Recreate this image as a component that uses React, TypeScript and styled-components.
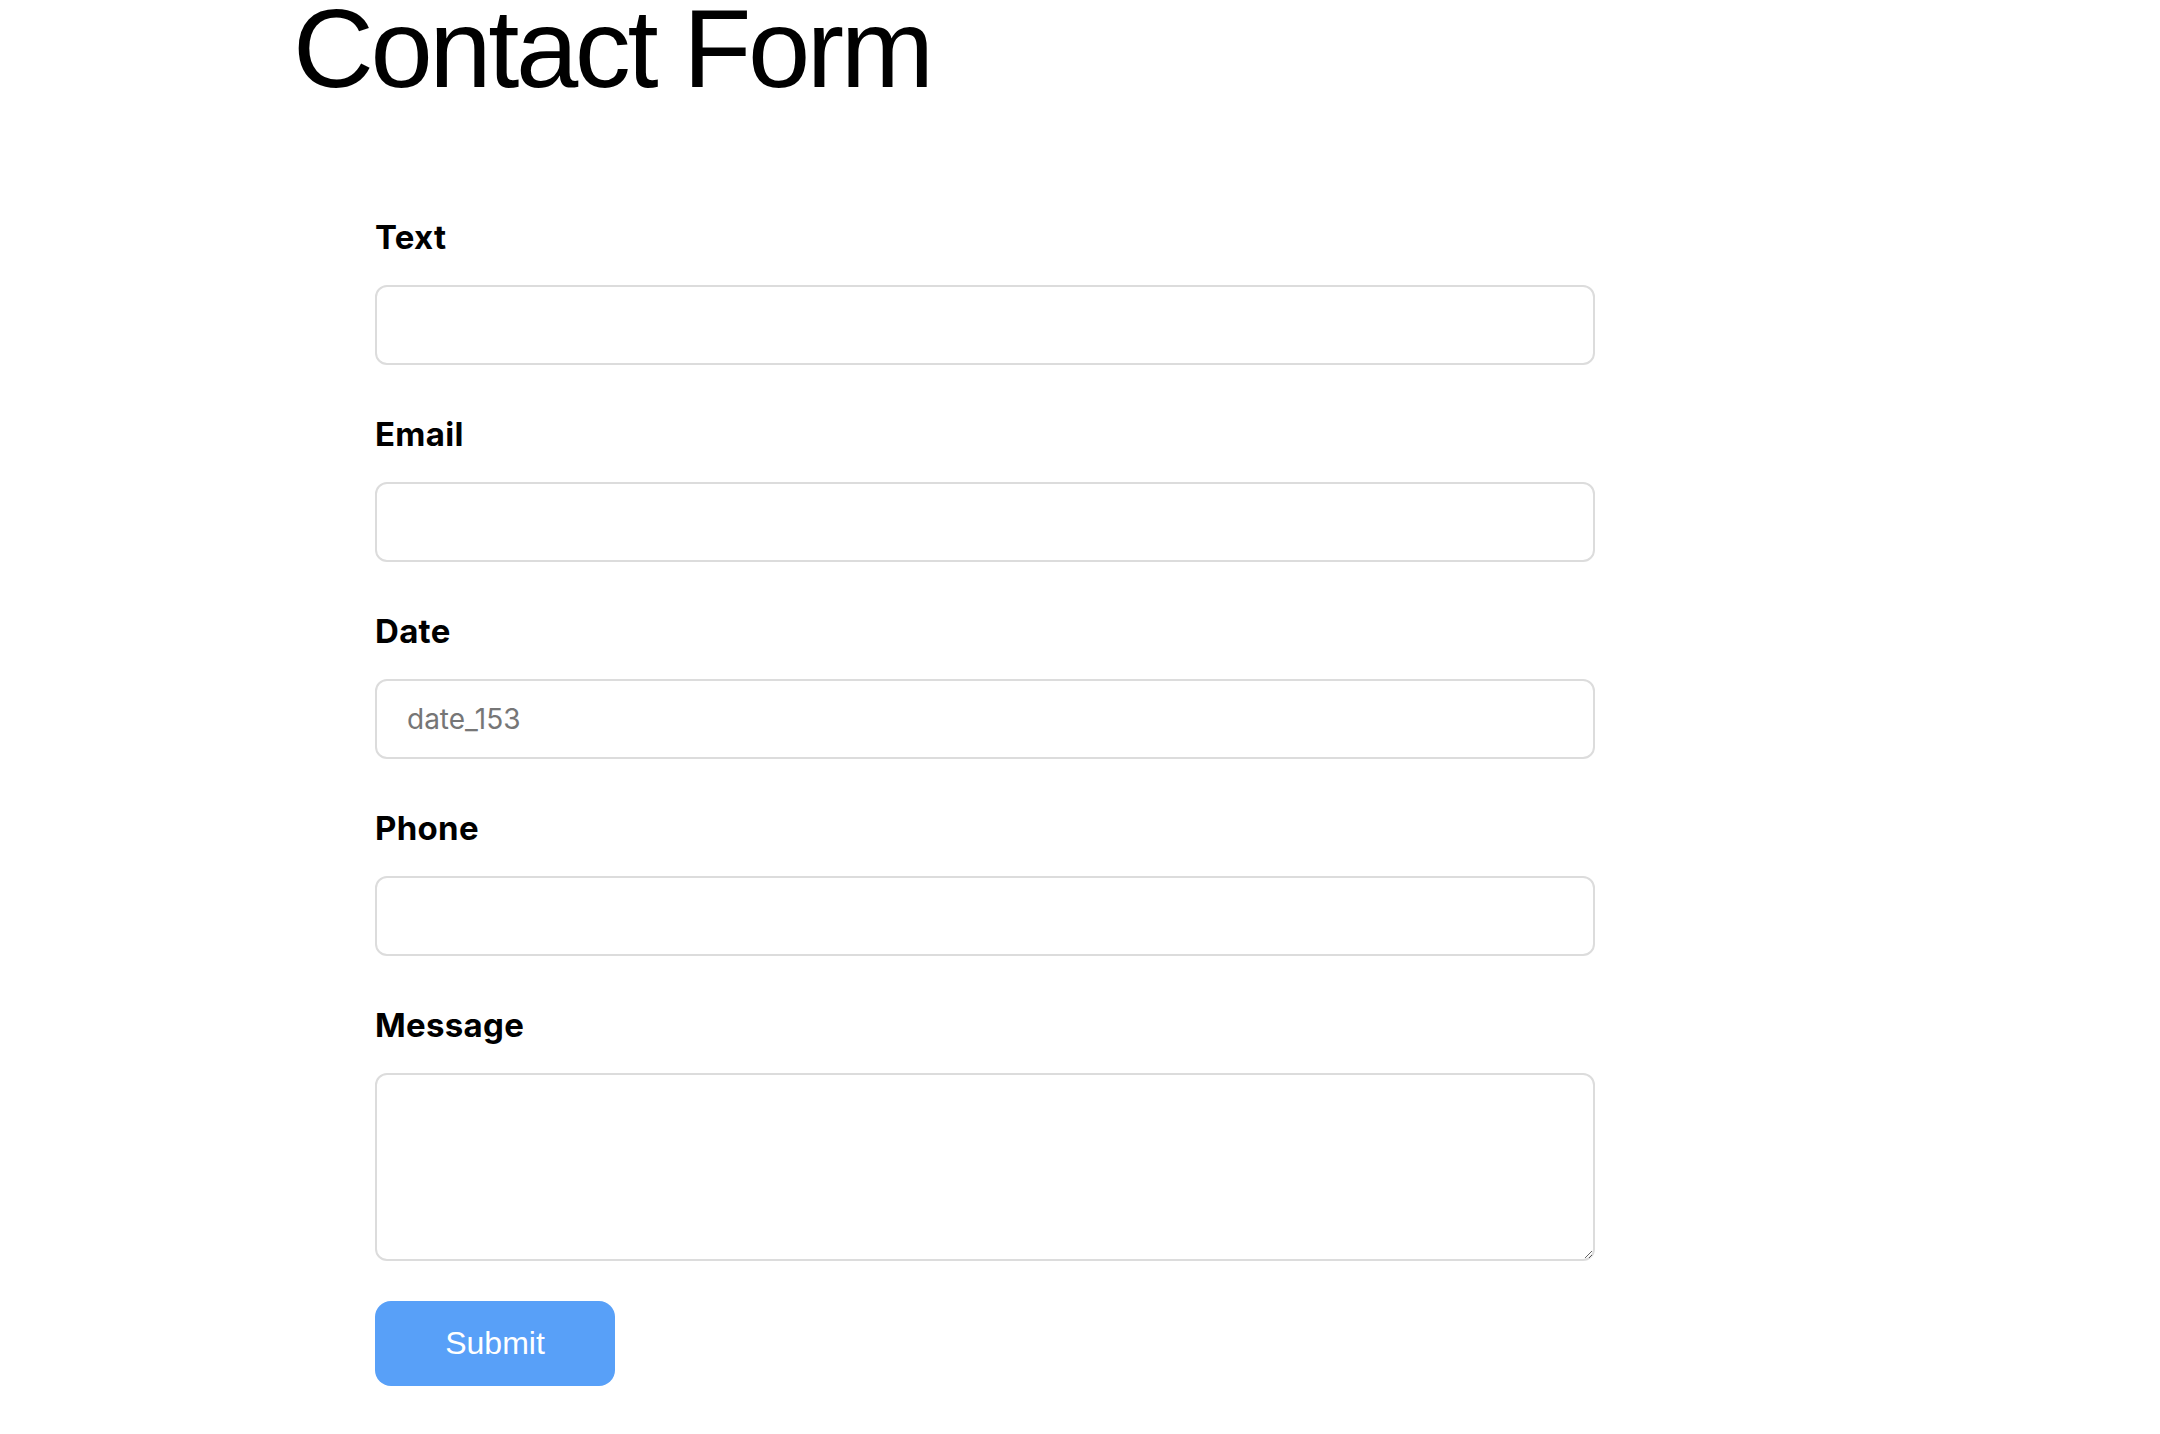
import React from "react";
import styled, { createGlobalStyle } from "styled-components";

const GlobalStyle = createGlobalStyle`
  html, body {
    margin: 0;
    padding: 0;
    background: #ffffff;
  }
  body {
    font-family: "Liberation Sans", Arial, sans-serif;
    color: #000000;
  }
`;

const Page = styled.div`
  padding: 0 0 60px 293px;
`;

const Title = styled.h1`
  margin: -7px 0 0;
  font-family: "Liberation Sans", Arial, sans-serif;
  font-size: 112px;
  font-weight: 400;
  line-height: 1;
  letter-spacing: -3.4px;
`;

const Form = styled.form`
  display: flex;
  flex-direction: column;
  width: 1220px;
  margin: 112px 0 0 82px;
`;

const Field = styled.div`
  display: flex;
  flex-direction: column;
  gap: 28px;
  margin-bottom: 49px;

  &:last-of-type {
    margin-bottom: 40px;
  }
`;

const Label = styled.label`
  display: block;
  font-family: Inter, "Noto Sans", sans-serif;
  font-size: 33px;
  font-weight: 700;
  line-height: 40px;
  letter-spacing: 0.3px;
`;

const Input = styled.input`
  box-sizing: border-box;
  width: 100%;
  height: 80px;
  padding: 0 30px;
  border: 2px solid #dcdcdc;
  border-radius: 12px;
  font-family: Inter, "Noto Sans", sans-serif;
  font-size: 28px;
  color: #000;
  outline: none;

  &::placeholder {
    color: #767676;
  }
`;

const TextArea = styled.textarea`
  box-sizing: border-box;
  width: 100%;
  height: 188px;
  padding: 20px 30px;
  border: 2px solid #dcdcdc;
  border-radius: 12px;
  font-family: Inter, "Noto Sans", sans-serif;
  font-size: 28px;
  resize: vertical;
  outline: none;
`;

const SubmitButton = styled.button`
  width: 240px;
  height: 85px;
  border: none;
  border-radius: 16px;
  background-color: #58a0f8;
  color: #ffffff;
  font-family: "Liberation Sans", Arial, sans-serif;
  font-size: 32px;
  cursor: pointer;
`;

const fields = [
  { id: "text", label: "Text", type: "text", placeholder: "" },
  { id: "email", label: "Email", type: "email", placeholder: "" },
  { id: "date", label: "Date", type: "text", placeholder: "date_153" },
  { id: "phone", label: "Phone", type: "tel", placeholder: "" },
];

export default function App() {
  return (
    <>
      <GlobalStyle />
      <Page>
        <Title>Contact Form</Title>
        <Form onSubmit={(e) => e.preventDefault()}>
          {fields.map((f) => (
            <Field key={f.id}>
              <Label htmlFor={f.id}>{f.label}</Label>
              <Input id={f.id} type={f.type} placeholder={f.placeholder} />
            </Field>
          ))}
          <Field>
            <Label htmlFor="message">Message</Label>
            <TextArea id="message" />
          </Field>
          <SubmitButton type="submit">Submit</SubmitButton>
        </Form>
      </Page>
    </>
  );
}
